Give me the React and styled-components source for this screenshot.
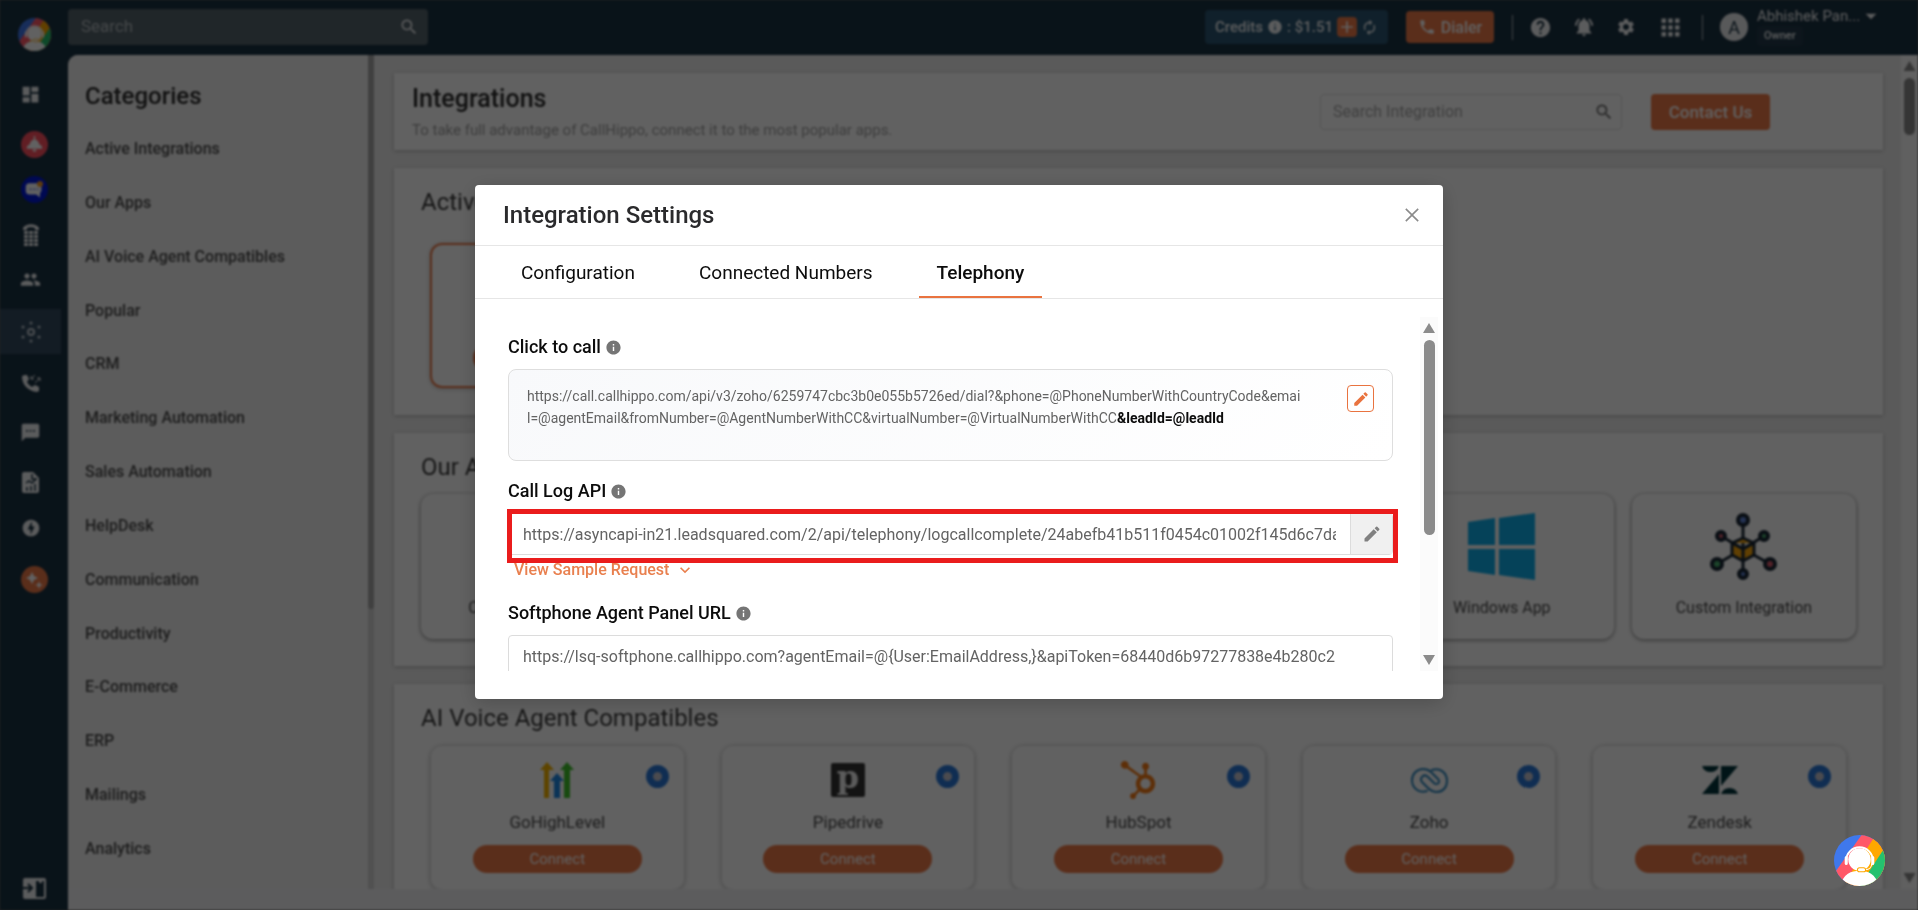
import { styled, createGlobalStyle } from "styled-components";
import {
  MdAdd,
  MdApps,
  MdArrowDropDown,
  MdAutorenew,
  MdDashboard,
  MdEdit,
  MdExpandMore,
  MdHelp,
  MdInfo,
  MdNotificationsActive,
  MdOfflineBolt,
  MdPeople,
  MdPhone,
  MdSearch,
  MdSettings,
  MdSms,
} from "react-icons/md";
import { AiOutlineClose } from "react-icons/ai";
import { FaHubspot } from "react-icons/fa";

const categories = [
  "Active Integrations",
  "Our Apps",
  "AI Voice Agent Compatibles",
  "Popular",
  "CRM",
  "Marketing Automation",
  "Sales Automation",
  "HelpDesk",
  "Communication",
  "Productivity",
  "E-Commerce",
  "ERP",
  "Mailings",
  "Analytics",
];

const navItems = [
  { id: "Dashboard", icon: <MdDashboard size={21} /> },
  { id: "Alerts", icon: <BellIcon />, badge: "#ff5060", space: 5 },
  { id: "Messages", icon: <BubbleIcon />, badge: "#0018d8" },
  { id: "Numbers", icon: <DialPadIcon /> },
  { id: "Users", icon: <MdPeople size={21} /> },
  { id: "Integrations", icon: <HubIcon />, active: true, space: 7 },
  { id: "Call logs", icon: <CallLogIcon />, space: 6 },
  { id: "SMS", icon: <MdSms size={21} />, space: 5 },
  { id: "Reports", icon: <ReportIcon />, space: 5 },
  { id: "Power dialer", icon: <MdOfflineBolt size={20} /> },
  { id: "AI", icon: <SparkIcon />, badge: "#ed7947", space: 7 },
];

const ourApps = [
  { name: "Chrome Extension" },
  { name: "iOS App" },
  { name: "Android App" },
  { name: "Mac App" },
  { name: "Windows App", icon: <WindowsIcon /> },
  { name: "Custom Integration", icon: <CustomIcon /> },
];

const voiceApps = [
  { name: "GoHighLevel", icon: <HighLevelIcon /> },
  { name: "Pipedrive", icon: <PipedriveIcon /> },
  { name: "HubSpot", icon: <FaHubspot size={38} color="#f57b16" /> },
  { name: "Zoho", icon: <ZohoIcon /> },
  { name: "Zendesk", icon: <ZendeskIcon /> },
];

export default function App() {
  return (
    <>
      <GlobalStyle />
      <Page>
        <Sidebar />
        <Column>
          <TopBar />
          <Content>
            <Categories />
            <Integrations />
            <PageScroll>
              <ScrollArrow />
              <PageThumb />
              <ScrollArrow $down />
            </PageScroll>
          </Content>
          <Footer />
        </Column>
      </Page>
      <Backdrop>
        <SettingsModal />
      </Backdrop>
      <ChatButton aria-label="Open chat">
        <Logo size={51} />
      </ChatButton>
    </>
  );
}

function Sidebar() {
  return (
    <SideNav>
      <LogoLink href="#home" aria-label="Home">
        <Logo size={33} />
      </LogoLink>
      {navItems.map((item) => (
        <SideLink
          key={item.id}
          href="#nav"
          aria-label={item.id}
          $active={item.active}
          $wide={item.badge}
          $space={item.space}
        >
          {item.badge ? <Badge $color={item.badge}>{item.icon}</Badge> : item.icon}
        </SideLink>
      ))}
      <Collapse aria-label="Expand menu">
        <CollapseIcon />
      </Collapse>
    </SideNav>
  );
}

function TopBar() {
  return (
    <Header>
      <TopSearch>
        <input type="text" placeholder="Search" aria-label="Search" />
        <MdSearch size={20} />
      </TopSearch>
      <Credits>
        Credits <MdInfo size={16} /> : $1.51
        <AddCredit aria-label="Add credits">
          <MdAdd size={20} />
        </AddCredit>
        <MdAutorenew size={17} />
      </Credits>
      <Dialer>
        <MdPhone size={18} />
        Dialer
      </Dialer>
      <Divider />
      <HeaderIcons>
        <MdHelp size={23} />
        <MdNotificationsActive size={22} />
        <MdSettings size={20} />
        <MdApps size={27} />
      </HeaderIcons>
      <Divider />
      <Avatar>A</Avatar>
      <User>
        <UserName>Abhishek Pan...</UserName>
        <Role>Owner</Role>
      </User>
      <UserCaret size={26} />
    </Header>
  );
}

function Categories() {
  return (
    <Aside>
      <CategoryPanel>
        <CategoryTitle>Categories</CategoryTitle>
        <CategoryList>
          {categories.map((name) => (
            <li key={name}>
              <a href="#category">{name}</a>
            </li>
          ))}
        </CategoryList>
      </CategoryPanel>
      <AsideScroll>
        <AsideThumb />
      </AsideScroll>
    </Aside>
  );
}

function Integrations() {
  return (
    <Main>
      <Banner>
        <div>
          <BannerTitle>Integrations</BannerTitle>
          <BannerText>
            To take full advantage of CallHippo, connect it to the most popular
            apps.
          </BannerText>
        </div>
        <BannerActions>
          <IntegrationSearch>
            <input
              type="text"
              placeholder="Search Integration"
              aria-label="Search Integration"
            />
            <MdSearch size={20} />
          </IntegrationSearch>
          <Contact>Contact Us</Contact>
        </BannerActions>
      </Banner>
      <Section>
        <SectionTitle>Active Integrations</SectionTitle>
        <CardGrid $top={26}>
          <AppCard $active>
            <AppIcon />
            <AppName>LeadSquared</AppName>
            <Connect>Settings</Connect>
          </AppCard>
        </CardGrid>
      </Section>
      <Section>
        <SectionTitle>Our Apps</SectionTitle>
        <TileGrid>
          {ourApps.map((app) => (
            <Tile key={app.name}>
              <TileIcon>{app.icon}</TileIcon>
              {app.name}
            </Tile>
          ))}
        </TileGrid>
      </Section>
      <Section>
        <SectionTitle>AI Voice Agent Compatibles</SectionTitle>
        <CardGrid $top={12}>
          {voiceApps.map((app) => (
            <AppCard key={app.name}>
              <InfoDot />
              <AppIcon>{app.icon}</AppIcon>
              <AppName>{app.name}</AppName>
              <Connect>Connect</Connect>
            </AppCard>
          ))}
        </CardGrid>
      </Section>
    </Main>
  );
}

function SettingsModal() {
  return (
    <Modal role="dialog" aria-labelledby="modal-title">
      <ModalHead>
        <ModalTitle id="modal-title">Integration Settings</ModalTitle>
        <Close aria-label="Close">
          <AiOutlineClose size={20} />
        </Close>
      </ModalHead>
      <Tabs role="tablist">
        <Tab role="tab">Configuration</Tab>
        <Tab role="tab">Connected Numbers</Tab>
        <Tab role="tab" aria-selected="true" $active>
          Telephony
        </Tab>
      </Tabs>
      <ModalBody>
        <Fields>
          <FieldLabel as="p">
            Click to call <MdInfo size={17} />
          </FieldLabel>
          <UrlBox>
            <UrlText>
              https://call.callhippo.com/api/v3/zoho/6259747cbc3b0e055b5726ed/dial?&amp;phone=@PhoneNumberWithCountryCode&amp;emai
              <br />
              l=@agentEmail&amp;fromNumber=@AgentNumberWithCC&amp;virtualNumber=@VirtualNumberWithCC
              <b>&amp;leadId=@leadId</b>
            </UrlText>
            <EditUrl aria-label="Edit click to call URL">
              <MdEdit size={18} />
            </EditUrl>
          </UrlBox>
          <FieldLabel htmlFor="call-log">
            Call Log API <MdInfo size={17} />
          </FieldLabel>
          <InputGroup>
            <input
              id="call-log"
              type="text"
              readOnly
              defaultValue="https://asyncapi-in21.leadsquared.com/2/api/telephony/logcallcomplete/24abefb41b511f0454c01002f145d6c7da/c5e1b7"
            />
            <Addon aria-label="Edit call log URL">
              <MdEdit size={20} />
            </Addon>
            <Highlight />
          </InputGroup>
          <SampleLink>
            View Sample Request <MdExpandMore size={20} />
          </SampleLink>
          <FieldLabel htmlFor="softphone">
            Softphone Agent Panel URL <MdInfo size={17} />
          </FieldLabel>
          <InputGroup>
            <input
              id="softphone"
              type="text"
              readOnly
              defaultValue="https://lsq-softphone.callhippo.com?agentEmail=@{User:EmailAddress,}&apiToken=68440d6b97277838e4b280c2"
            />
          </InputGroup>
        </Fields>
        <ModalScroll>
          <ScrollArrow />
          <ModalThumb />
          <ScrollArrow $down />
        </ModalScroll>
      </ModalBody>
    </Modal>
  );
}

function Logo({ size }) {
  return (
    <svg width={size} height={size} viewBox="0 0 50 50">
      <clipPath id={`round-${size}`}>
        <circle cx="25" cy="25" r="25" />
      </clipPath>
      <g clipPath={`url(#round-${size})`}>
        <rect width="50" height="50" fill="#3f78ec" />
        <path d="M27 0H50V50H0V38Z" fill="#ff5868" />
        <path d="M41 0H50V50H8Z" fill="#ffa800" />
        <path d="M50 12V50H25Z" fill="#25c16f" />
        <path d="M6 50C9 38 17 35 25 35S41 38 44 50Z" fill="#fff" />
        <circle cx="25" cy="24" r="11" fill="#fff" />
        <path
          d="M12 25a13 13 0 0 1 26 0"
          fill="none"
          stroke="#fff"
          strokeWidth="2"
        />
        <path
          d="M12 22v6M38 22v6"
          stroke="#fff"
          strokeWidth="3"
          strokeLinecap="round"
        />
        <path
          d="M37 28c0 4-3 6-6 6"
          fill="none"
          stroke="#fff"
          strokeWidth="1"
        />
        <rect
          x="23"
          y="32"
          width="8"
          height="4"
          rx="2"
          fill="#fff"
          stroke="#ffa800"
        />
      </g>
    </svg>
  );
}

function BellIcon() {
  return (
    <svg width="17" height="17" viewBox="0 0 24 24" fill="#fff">
      <path d="M11 0h2v5c4 1 5 4 6 7 3 1 4 3 4 6H1c0-3 1-5 4-6 1-3 2-6 6-7zM9 19h6l-1 3h-4z" />
    </svg>
  );
}

function BubbleIcon() {
  return (
    <svg width="18" height="18" viewBox="0 0 24 24">
      <path
        d="M6 3h11a5 5 0 0 1 5 5v4a5 5 0 0 1-2 4v6l-5-4H6a5 5 0 0 1-5-5V8a5 5 0 0 1 5-5z"
        fill="#fff"
      />
      <path d="M6 11h12" stroke="#0018d8" strokeDasharray="3 2" />
      <circle cx="20" cy="4" r="4" fill="#f59a23" />
    </svg>
  );
}

function DialPadIcon() {
  return (
    <svg width="18" height="22" viewBox="0 0 18 22" fill="currentColor">
      <path d="M1 6V4c3-5 13-5 16 0v2h-4V4c-2-1-6-1-8 0v2z" />
      {[8, 12, 16, 20].map((y) =>
        [4, 9, 14].map((x) => (
          <rect key={`${x}-${y}`} x={x - 2} y={y - 1} width="4" height="3" />
        ))
      )}
    </svg>
  );
}

function HubIcon() {
  return (
    <svg width="22" height="22" viewBox="0 0 22 22" fill="currentColor">
      <circle
        cx="11"
        cy="11"
        r="3"
        fill="none"
        stroke="currentColor"
        strokeWidth="2"
      />
      <circle cx="11" cy="2" r="1.5" />
      <circle cx="11" cy="20" r="1.5" />
      <circle cx="3" cy="6" r="1.5" />
      <circle cx="19" cy="6" r="1.5" />
      <circle cx="3" cy="16" r="1.5" />
      <circle cx="19" cy="16" r="1.5" />
    </svg>
  );
}

function CallLogIcon() {
  return (
    <svg width="20" height="20" viewBox="0 0 20 20">
      <path
        d="M4 2 1 3c0 9 6 15 15 16l2-1v-4l-4-2-3 2c-2-1-4-3-5-5l2-3-2-4z"
        fill="currentColor"
      />
      <path
        d="m14 2-4 4m0-3v3h3M14 10l5-5m-3 0h3v3"
        fill="none"
        stroke="currentColor"
      />
    </svg>
  );
}

function ReportIcon() {
  return (
    <svg width="18" height="21" viewBox="0 0 18 21">
      <path
        d="M2 0h9l6 6v13a2 2 0 0 1-2 2H2a2 2 0 0 1-2-2V2a2 2 0 0 1 2-2z"
        fill="currentColor"
      />
      <path
        d="M10 2v5h5M5 19v-4M9 19v-5M13 19v-7M4 11l3-2 3 2 4-4"
        fill="none"
        stroke="#1a3242"
        strokeWidth="1.5"
      />
    </svg>
  );
}

function SparkIcon() {
  return (
    <svg width="18" height="18" viewBox="0 0 18 18" fill="#fff">
      <path d="m7 1 2 4 4 2-4 2-2 4-2-4-4-2 4-2zM14 10l1 3 3 1-3 1-1 3-1-3-3-1 3-1z" />
    </svg>
  );
}

function CollapseIcon() {
  return (
    <svg width="23" height="21" viewBox="0 0 23 21">
      <rect width="23" height="21" rx="2" fill="currentColor" />
      <path d="M13 3h8v16h-8z" fill="#1a3242" />
      <path
        d="M0 10h8M5 6l4 4-4 4"
        fill="none"
        stroke="#1a3242"
        strokeWidth="2"
      />
      <path d="M16 3h3v2h-3z" fill="currentColor" />
    </svg>
  );
}

function WindowsIcon() {
  return (
    <svg width="67" height="67" viewBox="0 0 67 67" fill="#0faeeb">
      <path d="M0 9 27 5v27H0zM31 5 67 0v32H31zM0 36h27v26L0 58zM31 36h36v31l-36-5z" />
    </svg>
  );
}

function CustomIcon() {
  const nodes = [
    [33, 7, 5, "#5f84d8"],
    [11, 23, 4, "#d85a6c"],
    [54, 23, 4, "#49b06e"],
    [7, 51, 5, "#49b06e"],
    [60, 51, 5, "#d85a6c"],
    [33, 61, 4, "#5f84d8"],
  ];
  return (
    <svg width="67" height="67" viewBox="0 0 67 67" stroke="#1a2836">
      <g strokeWidth="3">
        {nodes.map(([x, y, r, fill]) => (
          <g key={`${x}-${y}`}>
            <path d={`M33 36 ${x} ${y}`} />
            <circle cx={x} cy={y} r={r} fill={fill} strokeWidth="4" />
          </g>
        ))}
        <path
          d="m33 25 11 5v12l-11 6-11-6V30zM22 30l11 6 11-6M33 36v12"
          fill="#fba70a"
          strokeLinejoin="round"
        />
      </g>
    </svg>
  );
}

function HighLevelIcon() {
  return (
    <svg width="34" height="36" viewBox="0 0 34 36">
      <path d="m7 0 7 8h-5v28H4V8H0z" fill="#f5b400" />
      <path d="m27 0 7 8h-4v28h-6V8h-4z" fill="#3fc22a" />
      <path d="m17 11 7 8h-4v17h-6V19h-4z" fill="#1e88e5" />
    </svg>
  );
}

function PipedriveIcon() {
  return <PipedriveBox>p</PipedriveBox>;
}

function ZohoIcon() {
  return (
    <svg
      width="37"
      height="25"
      viewBox="0 0 37 25"
      fill="none"
      stroke="#2a85bd"
      strokeWidth="2"
      strokeLinecap="round"
    >
      <path d="M16 23c-9 3-15-4-15-11C1 6 6 1 12 1c4 0 6 1 8 3l7 7c3 3-1 7-4 4l-6-6c-4-4-9 1-6 5l6 6c3 3 5 4 9 4 6 0 10-5 10-11C36 5 29-1 21 2" />
    </svg>
  );
}

function ZendeskIcon() {
  return (
    <svg width="36" height="28" viewBox="0 0 36 28" fill="#03363d">
      <path d="M0 0h17a9 9 0 0 1-17 0zM17 8v20H0zM19 0h17L19 20zM19 28a9 9 0 0 1 17 0z" />
    </svg>
  );
}

const GlobalStyle = createGlobalStyle`
  * {
    box-sizing: border-box;
  }
  body {
    margin: 0;
    font-family: Roboto, sans-serif;
    background-color: #5c5c5c;
    overflow: hidden;
  }
  h1, h2, p, ul {
    margin: 0;
    padding: 0;
    font-weight: 500;
  }
  button, input {
    font-family: inherit;
  }
  button {
    display: flex;
    align-items: center;
    justify-content: center;
    padding: 0;
    border: none;
    background: none;
    cursor: pointer;
  }
`;

const Page = styled.div`
  display: flex;
  height: 100vh;
  overflow: hidden;
  background-color: #1a3242;
  filter: blur(1px);
`;
const Column = styled.div`
  flex: 1;
  display: flex;
  flex-direction: column;
  min-width: 0;
`;

const SideNav = styled.nav`
  display: flex;
  flex-direction: column;
  width: 68px;
  padding-top: 18px;
  padding-bottom: 11px;
  color: #f0f2f4;
`;
const LogoLink = styled.a`
  display: flex;
  justify-content: center;
  height: 54px;
`;
const SideLink = styled.a`
  display: flex;
  align-items: center;
  justify-content: center;
  flex-shrink: 0;
  width: ${(props) => (props.$wide ? 68 : 61)}px;
  height: 45px;
  margin-top: ${(props) => props.$space || 0}px;
  color: ${(props) => (props.$active ? "#c4ccd4" : "inherit")};
  background-color: ${(props) => (props.$active ? "#334b60" : "transparent")};
`;
const Badge = styled.span`
  display: flex;
  align-items: center;
  justify-content: center;
  width: 27px;
  height: 27px;
  border-radius: 50%;
  background-color: ${(props) => props.$color};
`;
const Collapse = styled.button`
  margin-top: auto;
  color: inherit;
`;

const Header = styled.header`
  display: flex;
  align-items: center;
  height: 55px;
  padding-right: 34px;
  padding-bottom: 1px;
  color: #f0f2f4;
`;
const SearchBox = styled.div`
  display: flex;
  align-items: center;
  border-radius: 4px;
  input {
    flex: 1;
    min-width: 0;
    border: none;
    outline: none;
    background: none;
  }
`;
const TopSearch = styled(SearchBox)`
  width: 360px;
  height: 36px;
  margin-right: auto;
  padding-left: 13px;
  padding-right: 9px;
  background-color: #55646c;
  input {
    padding: 0 0 2px;
    font-size: 17px;
  }
  input::placeholder {
    color: #b4bcc0;
  }
`;
const Credits = styled.div`
  display: flex;
  align-items: center;
  gap: 4px;
  height: 34px;
  padding-inline: 10px;
  border-radius: 4px;
  background-color: #2a5571;
  font-size: 15px;
  font-weight: 500;
`;
const AddCredit = styled.button`
  width: 20px;
  height: 20px;
  border-radius: 4px;
  background-color: #ed7947;
  color: #fff;
`;
const OrangeButton = styled.button`
  border-radius: 4px;
  background-color: #ed7947;
  color: #fff;
  font-weight: 500;
`;
const Dialer = styled(OrangeButton)`
  gap: 5px;
  width: 88px;
  height: 32px;
  margin-left: 18px;
  font-size: 16px;
`;
const Divider = styled.span`
  width: 1px;
  height: 25px;
  margin-left: 18px;
  background-color: #a8b2b8;
`;
const HeaderIcons = styled.div`
  display: flex;
  align-items: center;
  gap: 21px;
  margin-left: 16px;
`;
const Avatar = styled.span`
  display: flex;
  align-items: center;
  justify-content: center;
  width: 28px;
  height: 28px;
  margin-left: 17px;
  border-radius: 50%;
  background-color: #e8eaec;
  color: #1a3242;
  font-size: 18px;
`;
const User = styled.div`
  display: flex;
  flex-direction: column;
  align-items: flex-start;
  gap: 1px;
  margin-left: 9px;
  margin-bottom: 2px;
`;
const UserName = styled.span`
  width: 101px;
  font-size: 15px;
  line-height: 18px;
  white-space: nowrap;
`;
const Role = styled.span`
  padding-inline: 7px;
  border-radius: 4px;
  background-color: #22394a;
  font-size: 11px;
  font-weight: 500;
  line-height: 20px;
`;
const UserCaret = styled(MdArrowDropDown)`
  align-self: flex-start;
  margin-top: 3px;
`;

const Content = styled.div`
  flex: 1;
  display: flex;
  min-height: 0;
  border-top-left-radius: 10px;
  overflow: hidden;
  background-color: #ededed;
`;
const Footer = styled.div`
  height: 21px;
  background-color: #f2f2f5;
`;
const Aside = styled.aside`
  display: flex;
  width: 306px;
  background-color: #f2f2f2;
`;
const CategoryPanel = styled.div`
  flex: 1;
  display: flex;
  flex-direction: column;
  padding: 27px 17px 30px;
`;
const CategoryTitle = styled.h2`
  color: #2c2c2c;
  font-size: 24px;
  line-height: 28px;
`;
const CategoryList = styled.ul`
  flex: 1;
  display: flex;
  flex-direction: column;
  justify-content: space-between;
  margin-top: 29px;
  list-style: none;
  font-size: 16px;
  line-height: 20px;
  a {
    color: #4c4c4c;
    text-decoration: none;
  }
`;
const AsideScroll = styled.div`
  width: 6px;
  background-color: #d4d4d4;
`;
const AsideThumb = styled.div`
  height: 554px;
  border-radius: 0 0 3px 3px;
  background-color: #a8a8a8;
`;

const Main = styled.main`
  flex: 1;
  min-width: 0;
  padding: 18px 18px 0 20px;
`;
const Panel = styled.section`
  margin-bottom: 18px;
  background-color: #fff;
  box-shadow: 0 1px 4px rgba(0, 0, 0, 0.25);
`;
const Banner = styled(Panel)`
  display: flex;
  align-items: center;
  justify-content: space-between;
  height: 77px;
  padding-left: 18px;
  padding-right: 113px;
`;
const BannerTitle = styled.h1`
  color: #2c2c2c;
  font-size: 25px;
  line-height: 30px;
`;
const BannerText = styled.p`
  margin-top: 6px;
  color: #a0a0a0;
  font-size: 15px;
  font-weight: 400;
  line-height: 20px;
`;
const BannerActions = styled.div`
  display: flex;
  align-items: center;
  gap: 29px;
`;
const IntegrationSearch = styled(SearchBox)`
  width: 302px;
  height: 36px;
  padding-left: 12px;
  padding-right: 7px;
  border: 1px solid #e0e0e0;
  color: #666;
  input {
    padding: 0;
    font-size: 16px;
  }
  input::placeholder {
    color: #a8a8a8;
  }
`;
const Contact = styled(OrangeButton)`
  width: 119px;
  height: 36px;
  font-size: 17px;
`;
const Section = styled(Panel)`
  padding: 19px 27px 27px;
`;
const SectionTitle = styled.h2`
  color: #3a3a3a;
  font-size: 24px;
  font-weight: 400;
  line-height: 30px;
`;
const CardGrid = styled.div`
  display: grid;
  grid-template-columns: repeat(5, 1fr);
  gap: 36px;
  margin: ${(props) => props.$top}px 9px 0;
`;
const AppCard = styled.div`
  position: relative;
  display: flex;
  flex-direction: column;
  align-items: center;
  height: 145px;
  padding-top: 16px;
  border: ${(props) =>
    props.$active ? "2px solid #ed7947" : "1px solid #e0e0e0"};
  border-radius: 12px;
  box-shadow: 0 1px 4px rgba(0, 0, 0, 0.25);
`;
const InfoDot = styled.span`
  position: absolute;
  top: 19px;
  right: 15px;
  width: 23px;
  height: 23px;
  border: 7px solid #2a78d8;
  border-radius: 50%;
  background-color: #c4c4d0;
`;
const AppIcon = styled.div`
  display: flex;
  align-items: center;
  height: 36px;
`;
const AppName = styled.span`
  margin-top: 12px;
  color: #4c4c4c;
  font-size: 17px;
  line-height: 24px;
`;
const Connect = styled(OrangeButton)`
  width: 169px;
  height: 28px;
  margin-top: 11px;
  border-radius: 14px;
  font-size: 15px;
  font-weight: 400;
`;
const PipedriveBox = styled.span`
  display: flex;
  align-items: center;
  justify-content: center;
  width: 34px;
  height: 34px;
  padding-bottom: 7px;
  border-radius: 2px;
  background-color: #343434;
  color: #f0f0f0;
  font-family: "DejaVu Serif", serif;
  font-size: 32px;
  font-weight: bold;
`;
const TileGrid = styled.div`
  display: grid;
  grid-template-columns: repeat(6, 1fr);
  gap: 18px;
  margin-top: 12px;
`;
const Tile = styled.div`
  display: flex;
  flex-direction: column;
  align-items: center;
  height: 145px;
  padding-top: 19px;
  border-radius: 12px;
  box-shadow: 0 1px 4px rgba(0, 0, 0, 0.5);
  color: #4c4c4c;
  font-size: 16px;
  line-height: 20px;
`;
const TileIcon = styled.div`
  height: 67px;
  margin-bottom: 18px;
`;

const Scroll = styled.div`
  display: flex;
  flex-direction: column;
  align-items: center;
  flex-shrink: 0;
  width: 18px;
  background-color: #fbfbfb;
`;
const ScrollArrow = styled.span`
  width: 12px;
  height: 10px;
  margin-top: ${(props) => (props.$down ? "auto" : "0")};
  background-color: #8b8b8b;
  clip-path: ${(props) =>
    props.$down
      ? "polygon(0 0, 100% 0, 50% 100%)"
      : "polygon(50% 0, 100% 100%, 0 100%)"};
`;
const PageScroll = styled(Scroll)`
  width: 17px;
  padding-block: 6px;
`;
const ScrollThumb = styled.span`
  width: 11px;
  margin-top: 7px;
  border-radius: 6px;
  background-color: #8b8b8b;
`;
const PageThumb = styled(ScrollThumb)`
  height: 57px;
`;
const ModalThumb = styled(ScrollThumb)`
  height: 195px;
`;

const Backdrop = styled.div`
  position: fixed;
  inset: 0;
  display: flex;
  align-items: flex-start;
  justify-content: center;
  padding-top: 185px;
  background-color: rgba(0, 0, 0, 0.62);
`;
const Modal = styled.div`
  width: 968px;
  padding-bottom: 28px;
  border-radius: 4px;
  background-color: #fff;
  box-shadow: 0 4px 20px rgba(0, 0, 0, 0.2);
`;
const ModalHead = styled.div`
  display: flex;
  align-items: center;
  justify-content: space-between;
  height: 61px;
  padding-left: 28px;
  padding-right: 21px;
  border-bottom: 1px solid #e6e6e6;
`;
const ModalTitle = styled.h2`
  color: #2a2a2c;
  font-size: 24px;
  line-height: 28px;
`;
const Close = styled.button`
  color: #8b8b8b;
`;
const Tabs = styled.div`
  display: flex;
  gap: 28px;
  height: 53px;
  padding-left: 28px;
  border-bottom: 1px solid #e6e6e6;
`;
const Tab = styled.button`
  padding-inline: 18px;
  padding-top: 2px;
  border-bottom: 2px solid ${(props) => (props.$active ? "#e9733f" : "transparent")};
  color: #0c0c0c;
  font-size: 19px;
  font-weight: ${(props) => (props.$active ? 500 : 400)};
`;
const ModalBody = styled.div`
  display: flex;
  justify-content: space-between;
  height: 354px;
  margin-top: 18px;
  padding-left: 33px;
  padding-right: 5px;
  overflow: hidden;
`;
const Fields = styled.div`
  flex: 1;
  margin-right: 27px;
  padding-top: 18px;
`;
const FieldLabel = styled.label`
  display: flex;
  align-items: center;
  gap: 4px;
  color: #0c0c0c;
  font-size: 18px;
  font-weight: 500;
  line-height: 24px;
  svg {
    color: #757575;
  }
`;
const UrlBox = styled.div`
  display: flex;
  align-items: flex-start;
  justify-content: space-between;
  height: 92px;
  margin-top: 10px;
  margin-bottom: 18px;
  padding: 15px 18px;
  border: 1px solid #dedede;
  border-radius: 8px;
  background: linear-gradient(135deg, #f8f9fb, #fff);
`;
const UrlText = styled.p`
  width: 808px;
  color: #636363;
  font-size: 14px;
  font-weight: 400;
  line-height: 22px;
  word-break: break-all;
  b {
    color: #0c0c0c;
    font-weight: 700;
  }
`;
const EditUrl = styled.button`
  width: 27px;
  height: 27px;
  border: 1px solid #e9733f;
  border-radius: 4px;
  color: #e9733f;
`;
const InputGroup = styled.div`
  position: relative;
  display: flex;
  height: 42px;
  margin-top: 10px;
  border: 1px solid #dcdcdc;
  border-radius: 4px;
  input {
    flex: 1;
    min-width: 0;
    margin-inline: 14px;
    padding: 0;
    border: none;
    outline: none;
    color: #636363;
    font-size: 16px;
  }
`;
const Addon = styled.button`
  width: 42px;
  border-left: 1px solid #dcdcdc;
  background-color: #f0f0f0;
  color: #808080;
`;
const Highlight = styled.span`
  position: absolute;
  inset: -5px -6px -9px -2px;
  border: 5px solid #ea1c1c;
  pointer-events: none;
`;
const SampleLink = styled.button`
  gap: 6px;
  margin-top: 4px;
  margin-bottom: 20px;
  padding-left: 6px;
  color: #e9804f;
  font-size: 16px;
  font-weight: 500;
  line-height: 22px;
`;
const ModalScroll = styled(Scroll)`
  padding-block: 6px;
`;

const ChatButton = styled.button`
  position: fixed;
  right: 33px;
  bottom: 24px;
`;
